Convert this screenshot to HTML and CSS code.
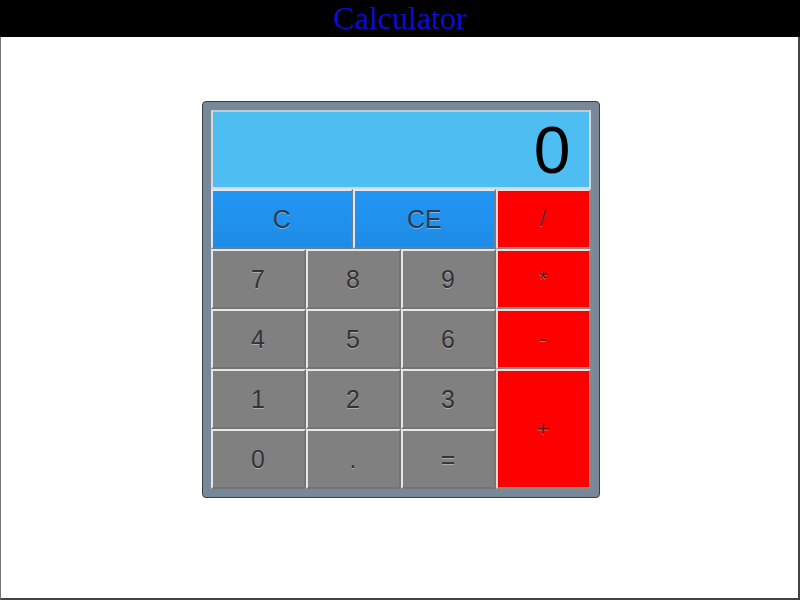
FILE: index.html
```html
<!DOCTYPE html>
<html>
<head>
<meta charset="utf-8">
<title>Calculator</title>
<link rel="stylesheet" href="styles.css">
</head>
<body>
<div class="page">
  <header class="title-bar"><h1 class="title">Calculator</h1></header>
  <main class="stage">
    <div class="calc">
      <div class="display">0</div>
      <div class="keys">
        <button class="key key-clear span3">C</button>
        <button class="key key-clear span3">CE</button>
        <button class="key key-op">/</button>
        <button class="key key-num">7</button>
        <button class="key key-num">8</button>
        <button class="key key-num">9</button>
        <button class="key key-op">*</button>
        <button class="key key-num">4</button>
        <button class="key key-num">5</button>
        <button class="key key-num">6</button>
        <button class="key key-op">-</button>
        <button class="key key-num">1</button>
        <button class="key key-num">2</button>
        <button class="key key-num">3</button>
        <button class="key key-op key-plus">+</button>
        <button class="key key-num">0</button>
        <button class="key key-num">.</button>
        <button class="key key-num">=</button>
      </div>
    </div>
  </main>
</div>
</body>
</html>
```

FILE: styles.css
```css
html, body {
  margin: 0;
  padding: 0;
  background: #ffffff;
}

.page {
  width: 800px;
  height: 600px;
  box-sizing: border-box;
  border-left: 1px solid #777777;
  border-right: 2px solid #444444;
  border-bottom: 2px solid #444444;
  display: flex;
  flex-direction: column;
}

.title-bar {
  height: 37px;
  background: #000000;
  margin: 0 -2px 0 -1px;
  display: flex;
  justify-content: center;
  align-items: center;
}

.title {
  margin: 0;
  font-family: "Liberation Serif", "Times New Roman", serif;
  font-weight: normal;
  font-size: 32px;
  line-height: 37px;
  color: #0c0cd4;
}

.stage {
  display: flex;
  justify-content: center;
  padding-top: 64px;
  padding-left: 2px;
}

.calc {
  width: 380px;
  padding: 8px;
  background: #778899;
  border: 1px solid #3a3f45;
  border-radius: 4px;
}

.display {
  height: 79px;
  box-sizing: border-box;
  background: #4dbdf2;
  border: 2px solid #d8d8d8;
  border-top-color: #c4c8cc;
  display: flex;
  align-items: center;
  justify-content: flex-end;
  padding-right: 18px;
  font-family: "Liberation Sans", Arial, sans-serif;
  font-size: 66px;
  color: #000000;
}

.keys {
  display: grid;
  grid-template-columns: repeat(8, 1fr);
  grid-auto-rows: 60px;
}

.key {
  grid-column: span 2;
  margin: 0;
  padding: 0;
  box-sizing: border-box;
  border: 2px solid;
  border-color: #e2e2e2 #8a8a8a #8a8a8a #e2e2e2;
  font-family: "Liberation Sans", Arial, sans-serif;
  font-size: 25px;
  color: #333333;
  text-shadow: 0 1px 0 rgba(255, 255, 255, 0.35);
  cursor: pointer;
}

.span3 {
  grid-column: span 3;
}

.key-num {
  background: #808080;
  border-color: #e6e6e6 #747474 #747474 #e6e6e6;
}

.key-clear {
  background: linear-gradient(#2196f3, #1e8ce6);
  border-color: #dde8f0 #6a7f95 #6a7f95 #dde8f0;
  color: #2a3a4a;
}

.key-op {
  background: #ff0000;
  border-color: #f0d8d8 #8a8a8a #8a8a8a #f0d8d8;
  color: #5a1a1a;
  font-size: 22px;
}

.key-plus {
  grid-row: span 2;
}
```
